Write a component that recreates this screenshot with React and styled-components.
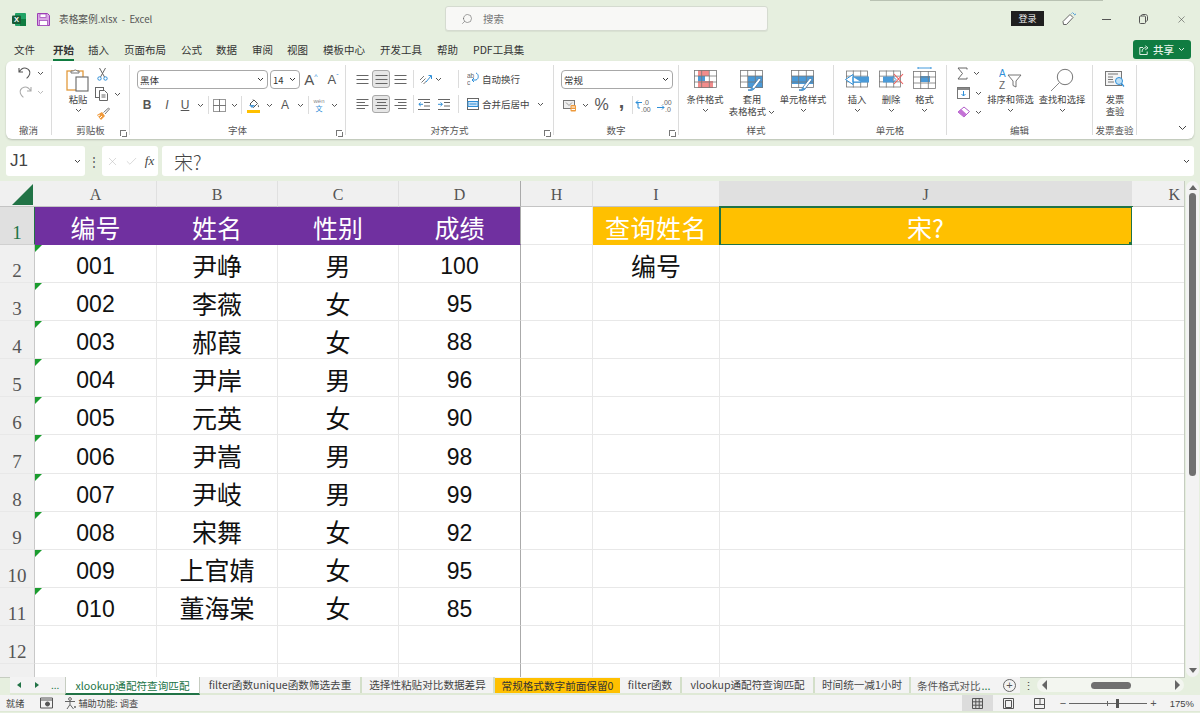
import React from 'react';
import styled, { createGlobalStyle } from 'styled-components';
import { Search, X, Check } from 'lucide-react';

const GlobalStyle = createGlobalStyle`
  html, body { margin: 0; padding: 0; background: #e6efdf; overflow: hidden; }
  body { font-family: "Noto Sans CJK SC", "Liberation Sans", sans-serif; color: #333; }
  * { box-sizing: border-box; }
`;

const colWidths = '35px 122px 121px 121px 122px 72px 127px 412px 53px';
const colNames = ['A', 'B', 'C', 'D', 'H', 'I', 'J', 'K'];
const menus = [
  ['文件', 18], ['开始', 14], ['插入', 15], ['页面布局', 15], ['公式', 14], ['数据', 15],
  ['审阅', 14], ['视图', 15], ['模板中心', 15], ['开发工具', 15], ['帮助', 15], ['PDF工具集', 0],
];
const students = [
  ['001', '尹峥', '男', '100'],
  ['002', '李薇', '女', '95'],
  ['003', '郝葭', '女', '88'],
  ['004', '尹岸', '男', '96'],
  ['005', '元英', '女', '90'],
  ['006', '尹嵩', '男', '98'],
  ['007', '尹岐', '男', '99'],
  ['008', '宋舞', '女', '92'],
  ['009', '上官婧', '女', '95'],
  ['010', '董海棠', '女', '85'],
];

const Chev = ({ c = '#555' }) => (
  <svg width="7" height="5" viewBox="0 0 7 5"><path d="M1 1l2.5 2.5L6 1" fill="none" stroke={c} strokeWidth="1" /></svg>
);

const Undo = ({ c = '#555' }) => (
  <svg width="14" height="14" viewBox="0 0 14 14" fill="none" stroke={c} strokeWidth="1.1">
    <path d="M1 2v4h4M1.2 6C3 3 5.5 1.5 8 2.2c3 .8 4.6 3.6 3.6 6.2-.6 1.6-1.6 2.9-3 4" />
  </svg>
);
const Redo = ({ c = '#aaa' }) => (
  <svg width="14" height="14" viewBox="0 0 14 14" fill="none" stroke={c} strokeWidth="1.1">
    <path d="M13 2v4H9M12.8 6C11 3 8.5 1.5 6 2.2 3 3 1.4 5.8 2.4 8.4c.6 1.6 1.6 2.9 3 4" />
  </svg>
);
const PasteIcon = () => (
  <svg width="24" height="24" viewBox="0 0 24 24" fill="none">
    <rect x="1" y="3" width="16" height="19" fill="#fff" stroke="#e29a3d" strokeWidth="1.3" />
    <path d="M5 5V3h2.5a2 2 0 0 1 3.5 0H13v2z" fill="#fff" stroke="#777" />
    <rect x="10" y="9" width="12" height="14" fill="#fff" stroke="#666" strokeWidth="1.1" />
  </svg>
);
const Scissors = () => (
  <svg width="11" height="14" viewBox="0 0 11 14" fill="none">
    <path d="M2.5 1l5 9M8.5 1l-5 9" stroke="#666" />
    <circle cx="2.5" cy="11.5" r="1.7" stroke="#2f8fd8" />
    <circle cx="8.5" cy="11.5" r="1.7" stroke="#2f8fd8" />
  </svg>
);
const CopyIcon = () => (
  <svg width="14" height="14" viewBox="0 0 14 14" fill="none" stroke="#666">
    <rect x=".5" y=".5" width="8" height="10" fill="#fff" />
    <path d="M4.5 3.5h5l3 3v7h-8z" fill="#fff" />
    <path d="M6.5 8h4M6.5 10h4" />
  </svg>
);
const Brush = () => (
  <svg width="14" height="14" viewBox="0 0 14 14" fill="none">
    <path d="M1 8l5-3 3 4-4 4z" fill="#ef9a3c" />
    <path d="M2 9l2-1M4 11l2-2" stroke="#fff" />
    <path d="M7.5 5.5L12.5 1l1 1-4.5 5" fill="#fff" stroke="#777" />
  </svg>
);
const BorderIcon = () => (
  <svg width="13" height="13" viewBox="0 0 13 13" fill="none">
    <rect x=".5" y=".5" width="12" height="12" stroke="#999" />
    <path d="M6.5 0v13M0 6.5h13" stroke="#777" />
  </svg>
);
const FillIcon = () => (
  <svg width="13" height="15" viewBox="0 0 13 15" fill="none">
    <path d="M3 6l4-4 3.5 3.5-4 4z" stroke="#555" />
    <path d="M6 1.5l1 1" stroke="#555" />
    <path d="M11 6.5c1 1.5 1.3 2 .6 2.8-.6-.2-1-1-.6-2.8z" fill="#555" />
    <path d="M2 7h6l-3 3z" fill="#4a9ad8" />
    <rect y="12" width="13" height="3" fill="#ffc000" />
  </svg>
);

const Lines = ({ mode = 'center', n = 3 }) => {
  const rows = n === 3 ? [2.5, 6.5, 10.5] : [1.5, 4.5, 7.5, 10.5];
  return (
    <svg width="13" height="13" viewBox="0 0 13 13" fill="none" stroke="#666">
      {rows.map((y, i) => {
        const short = i % 2 === 1;
        const x1 = short && mode === 'right' ? 4 : short && mode === 'center' ? 2 : 0.5;
        const x2 = short && mode === 'left' ? 9 : short && mode === 'center' ? 11 : 12.5;
        return <path key={y} d={`M${x1} ${y}H${x2}`} />;
      })}
    </svg>
  );
};
const Orient = () => (
  <svg width="13" height="13" viewBox="0 0 13 13" fill="none">
    <path d="M1 7l4-4M2.5 9.5l4-4M4.5 11l3-3" stroke="#777" />
    <path d="M7 9l5-6M9.5 2.5H12.5V6" stroke="#2f8fd8" />
  </svg>
);
const Indent = ({ right }) => (
  <svg width="12" height="11" viewBox="0 0 12 11" fill="none">
    <path d="M0 .5h12M6 3.5h6M6 7h6M0 10.5h12" stroke="#666" />
    {right ? <path d="M0 5.3h4M2.5 3.5l2 1.8-2 1.8" stroke="#2f8fd8" /> : <path d="M5 5.3H1M2.8 3.5l-2 1.8 2 1.8" stroke="#2f8fd8" />}
  </svg>
);
const WrapIcon = () => (
  <svg width="13" height="14" viewBox="0 0 13 14" fill="none">
    <text x="0" y="6" fontSize="6.5" fill="#666" fontFamily="Liberation Sans">ab</text>
    <text x="0" y="13" fontSize="6.5" fill="#666" fontFamily="Liberation Sans">c</text>
    <path d="M9 1c3 1 3 6 0 7H5.5M7 6l-2 2 2 2" stroke="#2f8fd8" />
  </svg>
);
const MergeIcon = () => (
  <svg width="12" height="12" viewBox="0 0 12 12" fill="none">
    <rect x=".5" y=".5" width="11" height="11" stroke="#666" />
    <rect x="1" y="3.5" width="10" height="5" fill="#cfe4f6" stroke="#2f8fd8" />
    <path d="M2.5 6h7" stroke="#2f8fd8" />
  </svg>
);
const Currency = () => (
  <svg width="14" height="13" viewBox="0 0 14 13" fill="none">
    <rect x=".5" y="1.5" width="11" height="8" stroke="#777" fill="#eee" />
    <path d="M3 3.5l3 3M9 3.5l-3 3" stroke="#999" />
    <rect x="7.5" y="6" width="5.5" height="6.5" rx="1" fill="#ee9a3c" />
    <path d="M8.5 8h3.5M8.5 10.5h3.5" stroke="#fff" />
  </svg>
);
const DecInc = () => (
  <svg width="18" height="15" viewBox="0 0 18 15" fill="none">
    <text x="8" y="6.5" fontSize="7" fill="#666" fontFamily="Liberation Sans">.0</text>
    <text x="6" y="14" fontSize="7" fill="#666" fontFamily="Liberation Sans">.00</text>
    <path d="M7 4.5H1M3 2.5l-2 2 2 2M3 5v5h2" stroke="#2f8fd8" />
  </svg>
);
const DecDec = () => (
  <svg width="18" height="15" viewBox="0 0 18 15" fill="none">
    <text x="6" y="6.5" fontSize="7" fill="#666" fontFamily="Liberation Sans">.00</text>
    <text x="9" y="14" fontSize="7" fill="#666" fontFamily="Liberation Sans">.0</text>
    <path d="M1 9.5h7M6 7.5l2 2-2 2" stroke="#2f8fd8" />
  </svg>
);

const TableLines = ({ w = 23, h = 18, y = 0 }) => (
  <g stroke="#777" fill="none" strokeWidth=".8">
    <rect x=".5" y={y + 0.5} width={w - 1} height={h - 1} />
    <path d={`M${w / 3} ${y}v${h}M${(2 * w) / 3} ${y}v${h}M0 ${y + h / 3}h${w}M0 ${y + (2 * h) / 3}h${w}`} />
  </g>
);
const CondIcon = () => (
  <svg width="23" height="18" viewBox="0 0 23 18">
    <rect x="4" y="0" width="11" height="6" fill="#f28c8c" />
    <rect x="4" y="6" width="7" height="5" fill="#4a9ad8" />
    <rect x="4" y="11" width="15" height="7" fill="#f28c8c" />
    <TableLines />
  </svg>
);
const BrushTip = ({ x = 9, y = 12 }) => (
  <g transform={`translate(${x} ${y})`}>
    <path d="M1 9c2 0 3.5-1 4-3L12-3l2 1.5L7 8c-1.5 1.5-4 2-6 1z" fill="#fff" stroke="#4a7fae" strokeWidth=".9" />
    <path d="M1 9c2 0 3.5-1 4-3l2.500 2c-1.500 1.500-4 2-6.500 1z" fill="#4a9ad8" />
  </g>
);
const TableStyleIcon = () => (
  <svg width="25" height="22" viewBox="0 0 25 22">
    <rect x="8" y="6" width="15" height="12" fill="#4a9ad8" />
    <TableLines h="18" />
    <BrushTip x={7} y={11} />
  </svg>
);
const CellStyleIcon = () => (
  <svg width="25" height="22" viewBox="0 0 25 22">
    <rect x="1" y="6" width="22" height="8" fill="#4a9ad8" />
    <TableLines h="18" />
    <BrushTip x={7} y={11} />
  </svg>
);
const InsertIcon = () => (
  <svg width="26" height="19" viewBox="0 0 26 19">
    <g transform="translate(2 .5)"><TableLines w={22} h={17} /></g>
    <rect x="9" y="6.5" width="16" height="6" fill="#4a9ad8" />
    <path d="M9 4.5L1.5 9.5 9 14.5zM9 7v5h8" fill="#fff" stroke="#2f8fd8" strokeWidth="1" />
  </svg>
);
const DeleteIcon = () => (
  <svg width="25" height="19" viewBox="0 0 25 19">
    <g transform="translate(0 .5)"><TableLines w={22} h={17} /></g>
    <rect x="4" y="6.5" width="10" height="6" fill="#4a9ad8" />
    <path d="M14 6.5l3 3-3 3" fill="none" stroke="#2f8fd8" />
    <path d="M15 4l9 10M24 4l-9 10" stroke="#ef5b5b" strokeWidth="1.1" />
  </svg>
);
const FormatIcon = () => (
  <svg width="23" height="22" viewBox="0 0 23 22">
    <path d="M5 1h13M5 0v2M18 0v2" stroke="#2f8fd8" strokeWidth=".9" />
    <rect x="7" y="9" width="10" height="6" fill="#4a9ad8" />
    <TableLines h="18" y={4} />
  </svg>
);
const AutoSum = () => (
  <svg width="11" height="13" viewBox="0 0 11 13"><path d="M10 2.5V1H1l4.500 5.500L1 12h9v-1.500" fill="none" stroke="#666" strokeWidth="1" /></svg>
);
const FillDown = () => (
  <svg width="13" height="12" viewBox="0 0 13 12" fill="none">
    <rect x=".5" y=".5" width="12" height="11" stroke="#777" />
    <rect x="1" y="1" width="11" height="2" fill="#888" />
    <path d="M6.5 4v5M4.5 7l2 2 2-2" stroke="#2f8fd8" />
  </svg>
);
const Eraser = () => (
  <svg width="13" height="12" viewBox="0 0 13 12" fill="none">
    <path d="M7 1l5.500 4.500L7 11 1 6z" fill="#fff" stroke="#b05cc8" />
    <path d="M1 6l3-3 5.500 5L7 11z" fill="#c472d6" />
  </svg>
);
const SortIcon = () => (
  <svg width="23" height="22" viewBox="0 0 23 22" fill="none">
    <text x="0" y="9" fontSize="10" fill="#2f8fd8" fontFamily="Liberation Sans">A</text>
    <text x="0" y="21" fontSize="10" fill="#666" fontFamily="Liberation Sans">Z</text>
    <path d="M9 7h13l-5 6v6l-3-1.500V13z" stroke="#666" strokeWidth=".9" fill="#fff" />
  </svg>
);
const FindIcon = () => (
  <svg width="24" height="24" viewBox="0 0 24 24" fill="none">
    <circle cx="15" cy="9" r="7.700" stroke="#666" strokeWidth=".9" />
    <path d="M9.500 14.500L1 23" stroke="#888" strokeWidth="1" />
  </svg>
);
const InvoiceIcon = () => (
  <svg width="20" height="17" viewBox="0 0 20 17" fill="none">
    <rect x=".5" y=".5" width="16" height="14" fill="#f4f4f4" stroke="#777" />
    <path d="M3 3h10M3 6h5M3 8.500h5M3 11h6" stroke="#777" />
    <circle cx="14" cy="10" r="3.500" fill="#bfe0f5" stroke="#2f8fd8" />
    <path d="M16.500 12.500L19 15.500" stroke="#2f8fd8" strokeWidth="1.200" />
  </svg>
);

const ExcelLogo = () => (
  <svg width="14" height="13" viewBox="0 0 14 13">
    <rect x="3" y="0" width="11" height="13" rx="1" fill="#21a366" />
    <rect x="8" y="6" width="6" height="7" fill="#107c41" />
    <rect x="0" y="2.500" width="9" height="8.500" rx="1" fill="#185c37" />
    <text x="2" y="9.300" fontSize="7.500" fontWeight="700" fill="#fff" fontFamily="Liberation Sans">X</text>
  </svg>
);
const SaveIcon = () => (
  <svg width="13" height="13" viewBox="0 0 13 13" fill="none">
    <path d="M.5.500h10l2 2v10H.5z" fill="#d9a6e4" stroke="#9c3fb5" />
    <rect x="3" y="1" width="6" height="3.500" fill="#fff" stroke="#9c3fb5" strokeWidth=".7" />
    <rect x="2.500" y="7.500" width="8" height="5" fill="#fff" stroke="#9c3fb5" strokeWidth=".7" />
  </svg>
);
const PenIcon = () => (
  <svg width="15" height="14" viewBox="0 0 15 14" fill="none">
    <path d="M1 9.500L8 2.500l3 3-6.500 7H1.500z" stroke="#666" fill="#fff" />
    <path d="M9.500 1.500l1-1M12 3l2-1M11 1l1 1" stroke="#4a9ad8" />
  </svg>
);
const RestoreIcon = () => (
  <svg width="9" height="10" viewBox="0 0 9 10" fill="none" stroke="#555">
    <rect x=".5" y="2" width="6" height="7.500" rx="1" />
    <path d="M2.500 2V1.300C2.500.800 3 .5 3.500.5h3c1 0 2 1 2 2V6c0 .8-.8 1.300-1.800 1.300" />
  </svg>
);
const ShareIcon = () => (
  <svg width="10" height="10" viewBox="0 0 10 10" fill="none" stroke="#dff0e3">
    <path d="M4 2.500H.8v7h7.400V6.500" />
    <path d="M3 7c0-3 1.800-4.300 4-4.300M6.300 .8L9 2.800 6.300 4.800" />
  </svg>
);

const Corner = () => (
  <svg width="21" height="21" viewBox="0 0 21 21"><path d="M21 0v21H0z" fill="#217346" /></svg>
);

const Cam = () => (
  <svg width="13" height="12" viewBox="0 0 13 12" fill="none" stroke="#555">
    <path d="M.5 1h12v10H.5z" />
    <path d="M.5 3h12" />
    <circle cx="7.500" cy="7" r="2" fill="#555" />
  </svg>
);
const Access = () => (
  <svg width="13" height="13" viewBox="0 0 13 13" fill="none" stroke="#666">
    <circle cx="6" cy="2" r="1.400" />
    <path d="M1 4.500h10M6 4.500v3L3 12M6 7.500l3.500 4.500" />
    <path d="M10 9l2 2M12 9l-2 2" stroke="#888" />
  </svg>
);
const ViewNormal = () => (
  <svg width="11" height="11" viewBox="0 0 11 11" fill="none" stroke="#555">
    <path d="M.5.500h10v10H.5zM3.800 0v11M7.200 0v11M0 3.800h11M0 7.200h11" />
  </svg>
);
const ViewPage = () => (
  <svg width="11" height="11" viewBox="0 0 11 11" fill="none" stroke="#555">
    <path d="M.5.500h10v10H.5z" />
    <path d="M2.500 2.500h6v7h-6z" />
  </svg>
);
const ViewBreak = () => (
  <svg width="11" height="11" viewBox="0 0 11 11" fill="none" stroke="#555">
    <path d="M.5.500h10v10H.5zM0 6.500h11M6 0v6.500" />
  </svg>
);

const App = () => {
  return (
    <Page>
      <GlobalStyle />
      <TopShadow />
      <TitleBar>
        <TitleLeft>
          <ExcelLogo />
          <SaveIcon />
          <DocName>表格案例.xlsx&nbsp; -&nbsp; Excel</DocName>
        </TitleLeft>
        <SearchBox>
          <Search size={12} color="#666" strokeWidth={1.2} style={{ transform: 'scaleX(-1)' }} />
          <span>搜索</span>
        </SearchBox>
        <TitleRight>
          <Login>登录</Login>
          <WinBtn $w={50}><PenIcon /></WinBtn>
          <WinBtn $w={24}><svg width="9" height="1"><path d="M0 .5h9" stroke="#555" /></svg></WinBtn>
          <WinBtn $w={50}><RestoreIcon /></WinBtn>
          <WinBtn $w={26}><X size={11} color="#444" strokeWidth={1.2} /></WinBtn>
        </TitleRight>
      </TitleBar>

      <MenuRow>
        {menus.map(([m, gap]) => (
          <MenuItem key={m} $active={m === '开始'} $gap={gap}>{m}</MenuItem>
        ))}
        <ShareBtn><ShareIcon /><b>共享</b><Chev c="#dff0e3" /></ShareBtn>
      </MenuRow>

      <Ribbon>
        <Group $w={46} label="撤消">
          <Col $gap={5} $pt={1} $pl={12}>
            <Row $gap={5}><Undo /><Chev /></Row>
            <Row $gap={5}><Redo /><Chev c="#bbb" /></Row>
          </Col>
        </Group>

        <Group $w={78} label="剪贴板" launcher>
          <Row $align="flex-start" $pt={2} $pl={14}>
            <BigBtn $w={24}>
              <IconSlot $top={1}><PasteIcon /></IconSlot>
              <BigLabel>粘贴</BigLabel>
              <Chev />
            </BigBtn>
            <Col $gap={6} $pl={5}>
              <Row $pl={2}><Scissors /></Row>
              <Row $gap={5}><CopyIcon /><Chev /></Row>
              <Row $pl={1}><Brush /></Row>
            </Col>
          </Row>
        </Group>

        <Group $w={216} label="字体" launcher>
          <Col $gap={7} $pt={5} $pl={7}>
            <Row $gap={2}>
              <Select $w={131}><span>黑体</span><Chev c="#333" /></Select>
              <Select $w={30}><span>14</span><Chev c="#333" /></Select>
              <GrowA>A<sup>^</sup></GrowA>
              <GrowA $small>A<sup>ˇ</sup></GrowA>
            </Row>
            <Row>
              <FontBtn $w={20}><b>B</b></FontBtn>
              <FontBtn $w={20}><i>I</i></FontBtn>
              <FontBtn $w={16}><u>U</u></FontBtn>
              <ChevBox $w={14}><Chev /></ChevBox>
              <VSep />
              <FontBtn $w={18}><BorderIcon /></FontBtn>
              <ChevBox $w={12}><Chev /></ChevBox>
              <VSep />
              <FontBtn $w={21}><FillIcon /></FontBtn>
              <ChevBox $w={11}><Chev /></ChevBox>
              <FontBtn $w={20}>A</FontBtn>
              <ChevBox $w={10}><Chev /></ChevBox>
              <VSep $m={3} />
              <FontBtn $w={14}><Wen>wén<em>文</em></Wen></FontBtn>
              <ChevBox $w={16}><Chev /></ChevBox>
            </Row>
          </Col>
        </Group>

        <Group $w={208} label="对齐方式" launcher>
          <Col $gap={7} $pt={5} $pl={7}>
            <Row>
              <AlignBtn><Lines mode="full" /></AlignBtn>
              <AlignBtn $active><Lines mode="full" /></AlignBtn>
              <AlignBtn><Lines mode="full" /></AlignBtn>
              <VSep $m={3} />
              <AlignBtn $w={16}><Orient /></AlignBtn>
              <ChevBox $w={11}><Chev /></ChevBox>
              <Spacer $w={13} />
              <VSep />
              <Spacer $w={5} />
              <AlignBtn $w={16}><WrapIcon /></AlignBtn>
              <SmallText>自动换行</SmallText>
            </Row>
            <Row>
              <AlignBtn><Lines mode="left" n={4} /></AlignBtn>
              <AlignBtn $active><Lines mode="center" n={4} /></AlignBtn>
              <AlignBtn><Lines mode="right" n={4} /></AlignBtn>
              <VSep $m={3} />
              <AlignBtn $w={14}><Indent /></AlignBtn>
              <AlignBtn $w={26}><Indent right /></AlignBtn>
              <VSep />
              <Spacer $w={5} />
              <AlignBtn $w={16}><MergeIcon /></AlignBtn>
              <SmallText>合并后居中</SmallText>
              <ChevBox $w={22}><Chev /></ChevBox>
            </Row>
          </Col>
        </Group>

        <Group $w={125} label="数字" launcher>
          <Col $gap={7} $pt={5} $pl={7}>
            <Select $w={112}><span>常规</span><Chev c="#333" /></Select>
            <Row>
              <FontBtn $w={18}><Currency /></FontBtn>
              <ChevBox $w={12}><Chev /></ChevBox>
              <FontBtn $w={21}><Percent>%</Percent></FontBtn>
              <FontBtn $w={19}><Comma>,</Comma></FontBtn>
              <VSep />
              <FontBtn $w={20}><DecInc /></FontBtn>
              <FontBtn $w={22}><DecDec /></FontBtn>
            </Row>
          </Col>
        </Group>

        <Group $w={155} label="样式">
          <Row $align="flex-start" $pt={2} $pl={3}>
            <BigBtn $w={46}>
              <IconSlot $top={3}><CondIcon /></IconSlot>
              <BigLabel>条件格式</BigLabel>
              <Chev />
            </BigBtn>
            <BigBtn $w={48}>
              <IconSlot $top={3}><TableStyleIcon /></IconSlot>
              <BigLabel>套用</BigLabel>
              <BigLabel>表格格式 <Chev /></BigLabel>
            </BigBtn>
            <BigBtn $w={54}>
              <IconSlot $top={3}><CellStyleIcon /></IconSlot>
              <BigLabel>单元格样式</BigLabel>
              <Chev />
            </BigBtn>
          </Row>
        </Group>

        <Group $w={113} label="单元格">
          <Row $align="flex-start" $pt={2} $pl={6}>
            <BigBtn $w={34}><IconSlot $top={3}><InsertIcon /></IconSlot><BigLabel>插入</BigLabel><Chev /></BigBtn>
            <BigBtn $w={34}><IconSlot $top={3}><DeleteIcon /></IconSlot><BigLabel>删除</BigLabel><Chev /></BigBtn>
            <BigBtn $w={33}><IconSlot><FormatIcon /></IconSlot><BigLabel>格式</BigLabel><Chev /></BigBtn>
          </Row>
        </Group>

        <Group $w={146} label="编辑">
          <Row $align="flex-start" $pt={2} $pl={10}>
            <Col $gap={7}>
              <Row $gap={5}><AutoSum /><Chev /></Row>
              <Row $gap={5}><FillDown /><Chev /></Row>
              <Row $gap={5}><Eraser /><Chev /></Row>
            </Col>
            <BigBtn $w={53} $ml={2}><IconSlot $top={1}><SortIcon /></IconSlot><BigLabel>排序和筛选</BigLabel><Chev /></BigBtn>
            <BigBtn $w={50}><IconSlot $top={1}><FindIcon /></IconSlot><BigLabel>查找和选择</BigLabel><Chev /></BigBtn>
          </Row>
        </Group>

        <Group $w={44} label="发票查验">
          <Row $align="flex-start" $pt={2} $pl={12}>
            <BigBtn $w={20}>
              <IconSlot $top={4}><InvoiceIcon /></IconSlot>
              <BigLabel>发票</BigLabel>
              <BigLabel>查验</BigLabel>
            </BigBtn>
          </Row>
        </Group>

        <Collapse><svg width="9" height="6" viewBox="0 0 9 6"><path d="M1 1l3.500 3.500L8 1" fill="none" stroke="#444" /></svg></Collapse>
      </Ribbon>

      <FormulaBar>
        <NameBox><span>J1</span><Chev c="#444" /></NameBox>
        <Dots>⋮</Dots>
        <FxBox>
          <X size={13} color="#bbb" strokeWidth={1} />
          <Check size={13} color="#bbb" strokeWidth={1} />
          <Fx>fx</Fx>
        </FxBox>
        <FormulaInput><span>宋?</span><Chev c="#444" /></FormulaInput>
      </FormulaBar>

      <SheetWrap>
        <Sheet>
          <CornerCell><Corner /></CornerCell>
          {colNames.map((c, i) => (
            <ColHead key={c} $selected={c === 'J'} $freeze={i === 3} $edge={c === 'K'}>{c}</ColHead>
          ))}

          <RowHead $selected>1</RowHead>
          {['编号', '姓名', '性别', '成绩'].map((t, i) => (
            <Cell key={t} $bg="#7030a0" $color="#fff" $freeze={i === 3}>{t}</Cell>
          ))}
          <Cell />
          <Cell $bg="#ffc000" $color="#fff" $tight>查询姓名</Cell>
          <Cell $bg="#ffc000" $color="#fff" $active>宋?<Handle /></Cell>
          <Cell />

          {Array.from({ length: 11 }, (_, r) => {
            const row = students[r];
            return (
              <React.Fragment key={r}>
                <RowHead>{r + 2}</RowHead>
                <Cell $num $flag={!!row}>{row && row[0]}</Cell>
                <Cell>{row && row[1]}</Cell>
                <Cell>{row && row[2]}</Cell>
                <Cell $num $freeze>{row && row[3]}</Cell>
                <Cell />
                <Cell>{r === 0 ? '编号' : ''}</Cell>
                <Cell />
                <Cell />
              </React.Fragment>
            );
          })}

          <RowHead />
          {colNames.map((c, i) => <Cell key={c} $freeze={i === 3} />)}
        </Sheet>
        <VScroll>
          <ArrowUp />
          <VThumb />
          <ArrowDown />
        </VScroll>
      </SheetWrap>

      <TabBar>
        <TabStrip>
          <TabNav>
            <NavArrow $left />
            <NavArrow />
            <NavDots>...</NavDots>
          </TabNav>
          <ActiveTab>xlookup通配符查询匹配</ActiveTab>
          <SheetTab $w={162}>filter函数unique函数筛选去重</SheetTab>
          <SheetTab $w={133}>选择性粘贴对比数据差异</SheetTab>
          <YellowTab>常规格式数字前面保留0</YellowTab>
          <SheetTab $w={62}>filter函数</SheetTab>
          <SheetTab $w={133}>vlookup通配符查询匹配</SheetTab>
          <SheetTab $w={96}>时间统一减1小时</SheetTab>
          <LastTab>条件格式对比 <em>...</em></LastTab>
          <AddTab>+</AddTab>
        </TabStrip>
        <SplitDots>⋮</SplitDots>
        <HScroll>
          <NavArrow $left $big />
          <HThumb />
          <NavArrow $big />
        </HScroll>
      </TabBar>

      <StatusBar>
        <StatusText>就绪</StatusText>
        <StatusIcon $w={15} $ml={16}><Cam /></StatusIcon>
        <StatusIcon $w={14} $ml={9}><Access /></StatusIcon>
        <StatusText>辅助功能: 调查</StatusText>
        <StatusRight>
          <ViewBtn $active><ViewNormal /></ViewBtn>
          <ViewBtn><ViewPage /></ViewBtn>
          <ViewBtn><ViewBreak /></ViewBtn>
          <Zoom>
            <b>−</b>
            <Slider><SliderTick /><SliderThumb /></Slider>
            <b>+</b>
          </Zoom>
          <ZoomPct>175%</ZoomPct>
        </StatusRight>
      </StatusBar>
    </Page>
  );
};

const Group = ({ $w, label, launcher, children }) => (
  <GroupBox $w={$w}>
    <GroupBody>{children}</GroupBody>
    <GroupLabel>{label}</GroupLabel>
    {launcher && <Launcher />}
  </GroupBox>
);

export default App;

const Page = styled.div`
  position: relative;
  width: 1200px;
  height: 713px;
  background: #e6efdf;
  overflow: hidden;
  display: flex;
  flex-direction: column;
`;

const TopShadow = styled.div`
  position: absolute;
  left: 870px;
  top: 0;
  width: 233px;
  height: 1px;
  background: #b9c2b3;
`;

const TitleBar = styled.div`
  height: 38px;
  display: flex;
  align-items: center;
`;

const TitleLeft = styled.div`
  width: 445px;
  padding-left: 12px;
  display: flex;
  align-items: center;
  gap: 11px;
`;

const DocName = styled.span`
  font-size: 9.7px;
  color: #555;
  margin-left: -2px;
`;

const SearchBox = styled.div`
  width: 323px;
  height: 25px;
  margin-top: -1px;
  background: #f8f8f6;
  border: 1px solid #d5dbd0;
  border-radius: 3px;
  box-shadow: 0 1px 1px rgba(0, 0, 0, 0.06);
  display: flex;
  align-items: center;
  padding-left: 15px;
  gap: 10px;
  font-size: 10.5px;
  color: #777;
`;

const TitleRight = styled.div`
  flex: 1;
  display: flex;
  align-items: center;
  justify-content: flex-end;
  padding-right: 6px;
`;

const Login = styled.div`
  width: 33px;
  height: 15px;
  margin-top: -1px;
  background: #1f1f1f;
  color: #eee;
  font-size: 9px;
  line-height: 15px;
  text-align: center;
`;

const WinBtn = styled.div`
  width: ${({ $w }) => $w}px;
  display: flex;
  justify-content: center;
`;

const MenuRow = styled.div`
  height: 23px;
  display: flex;
  align-items: center;
  padding-left: 14px;
  position: relative;
`;

const MenuItem = styled.div`
  font-size: 10.5px;
  color: #333;
  font-weight: ${({ $active }) => ($active ? 700 : 400)};
  margin-right: ${({ $gap }) => $gap}px;
  position: relative;
  line-height: 20px;
  &::after {
    content: '';
    display: ${({ $active }) => ($active ? 'block' : 'none')};
    position: absolute;
    left: 0;
    right: 0;
    bottom: -1px;
    height: 2px;
    background: #107c41;
  }
`;

const ShareBtn = styled.div`
  margin-left: auto;
  margin-right: 9px;
  width: 58px;
  height: 19px;
  background: #107c41;
  color: #eaf5ec;
  border-radius: 3px;
  display: flex;
  align-items: center;
  justify-content: center;
  gap: 4px;
  font-size: 10.5px;
  b { font-weight: 500; }
`;

const Ribbon = styled.div`
  margin: 0 6px;
  height: 78px;
  flex-shrink: 0;
  background: #fff;
  border-radius: 6px;
  box-shadow: 0 1px 2px rgba(0, 0, 0, 0.2);
  display: flex;
  position: relative;
`;

const GroupBox = styled.div`
  width: ${({ $w }) => $w}px;
  flex-shrink: 0;
  position: relative;
  display: flex;
  flex-direction: column;
  margin: 4px 0;
  border-right: 1px solid #dcdcdc;
`;

const GroupBody = styled.div`
  flex: 1;
  min-height: 0;
`;

const GroupLabel = styled.div`
  height: 13px;
  line-height: 13px;
  margin-bottom: -2px;
  text-align: center;
  font-size: 9.5px;
  color: #555;
  white-space: nowrap;
`;

const Launcher = styled.div`
  position: absolute;
  right: 3px;
  bottom: -1px;
  width: 6px;
  height: 6px;
  border-left: 1px solid #777;
  border-top: 1px solid #777;
  &::after {
    content: '';
    position: absolute;
    left: 1px;
    top: 1px;
    width: 4px;
    height: 4px;
    border-right: 1px solid #777;
    border-bottom: 1px solid #777;
  }
`;

const Row = styled.div`
  display: flex;
  align-items: ${({ $align }) => $align || 'center'};
  gap: ${({ $gap }) => $gap || 0}px;
  padding-top: ${({ $pt }) => $pt || 0}px;
  padding-left: ${({ $pl }) => $pl || 0}px;
`;

const Col = styled.div`
  display: flex;
  flex-direction: column;
  gap: ${({ $gap }) => $gap || 0}px;
  padding-top: ${({ $pt }) => $pt || 0}px;
  padding-left: ${({ $pl }) => $pl || 0}px;
`;

const BigBtn = styled.div`
  width: ${({ $w }) => $w}px;
  margin-left: ${({ $ml }) => $ml || 0}px;
  display: flex;
  flex-direction: column;
  align-items: center;
  flex-shrink: 0;
`;

const IconSlot = styled.div`
  height: 26px;
  padding-top: ${({ $top }) => $top || 0}px;
  display: flex;
  align-items: flex-start;
  justify-content: center;
`;

const BigLabel = styled.div`
  font-size: 9.3px;
  line-height: 12px;
  color: #444;
  white-space: nowrap;
  & + svg { margin-top: 3px; }
`;

const Select = styled.div`
  width: ${({ $w }) => $w}px;
  height: 19px;
  border: 1px solid #a8a8a8;
  border-radius: 4px;
  display: flex;
  align-items: center;
  justify-content: space-between;
  padding: 0 3px 0 2px;
  font-size: 9.5px;
  color: #333;
  flex-shrink: 0;
  background: #fff;
`;

const GrowA = styled.div`
  width: 20px;
  text-align: center;
  font-family: "Liberation Sans", sans-serif;
  font-size: ${({ $small }) => ($small ? 13 : 15)}px;
  color: #555;
  margin-left: ${({ $small }) => ($small ? 0 : -1)}px;
  white-space: nowrap;
  sup { font-size: 7px; color: #2f8fd8; line-height: 0; }
`;

const FontBtn = styled.div`
  width: ${({ $w }) => $w}px;
  height: 18px;
  display: flex;
  align-items: center;
  justify-content: center;
  font-family: "Liberation Sans", sans-serif;
  font-size: 12px;
  color: #555;
  flex-shrink: 0;
`;

const ChevBox = styled.div`
  width: ${({ $w }) => $w}px;
  display: flex;
  justify-content: center;
  flex-shrink: 0;
`;

const VSep = styled.div`
  width: 1px;
  height: 18px;
  background: #dcdcdc;
  margin: 0 ${({ $m }) => $m ?? 1}px;
  flex-shrink: 0;
`;

const Spacer = styled.div`
  width: ${({ $w }) => $w}px;
  flex-shrink: 0;
`;

const Wen = styled.div`
  font-size: 6px;
  line-height: 7px;
  text-align: center;
  color: #888;
  display: flex;
  flex-direction: column;
  em { font-style: normal; color: #2f8fd8; font-size: 7px; font-family: "Noto Sans CJK SC", sans-serif; }
`;

const AlignBtn = styled.div`
  width: ${({ $w }) => $w || 18}px;
  height: 18px;
  margin-right: ${({ $w }) => ($w ? 0 : 1)}px;
  display: flex;
  align-items: center;
  justify-content: center;
  flex-shrink: 0;
  border-radius: 3px;
  background: ${({ $active }) => ($active ? '#e6e6e6' : 'transparent')};
  border: 1px solid ${({ $active }) => ($active ? '#a8a8a8' : 'transparent')};
`;

const SmallText = styled.span`
  font-size: 9.5px;
  color: #444;
  margin-left: 1px;
  white-space: nowrap;
`;

const Percent = styled.span`
  font-size: 16px;
`;

const Comma = styled.span`
  font-size: 20px;
  font-weight: 700;
  line-height: 10px;
  margin-top: -8px;
`;

const Collapse = styled.div`
  position: absolute;
  right: 7px;
  bottom: 8px;
  line-height: 0;
`;

const FormulaBar = styled.div`
  height: 30px;
  margin: 7px 6px 0;
  flex-shrink: 0;
  display: flex;
  align-items: stretch;
`;

const NameBox = styled.div`
  width: 79px;
  background: #fff;
  border-radius: 3px;
  display: flex;
  align-items: center;
  justify-content: space-between;
  padding: 0 4px 0 4px;
  font-family: "Liberation Sans", sans-serif;
  font-size: 17px;
  color: #444;
`;

const Dots = styled.div`
  width: 17px;
  text-align: center;
  line-height: 30px;
  font-size: 12px;
  color: #555;
`;

const FxBox = styled.div`
  width: 56px;
  background: #fff;
  border-radius: 3px;
  display: flex;
  align-items: center;
  justify-content: center;
  gap: 6px;
`;

const Fx = styled.i`
  font-family: "Liberation Serif", serif;
  font-size: 13px;
  color: #444;
  margin-left: 1px;
`;

const FormulaInput = styled.div`
  flex: 1;
  margin-left: 4px;
  background: #fff;
  border-radius: 3px;
  display: flex;
  align-items: center;
  justify-content: space-between;
  padding: 0 4px 0 12px;
  font-size: 19px;
  color: #444;
  font-weight: 300;
`;

const SheetWrap = styled.div`
  height: 496px;
  margin-top: 5px;
  flex-shrink: 0;
  display: flex;
`;

const Sheet = styled.div`
  width: 1185px;
  height: 497px;
  display: grid;
  grid-template-columns: ${colWidths};
  grid-template-rows: 26px repeat(12, 38.08px) 14px;
  background: #fff;
  overflow: hidden;
  border-bottom: 1px solid #c6cdc1;
  border-right: 1px solid #c6cdc1;
`;

const CornerCell = styled.div`
  background: #f0f0f0;
  border-bottom: 1px solid #c4c4c4;
  padding: 3px 0 0 12px;
  line-height: 0;
`;

const ColHead = styled.div`
  background: ${({ $selected }) => ($selected ? '#e0e0e0' : '#f0f0f0')};
  color: #555;
  font-family: "Liberation Serif", serif;
  font-size: 16px;
  display: flex;
  align-items: center;
  justify-content: ${({ $edge }) => ($edge ? 'flex-end' : 'center')};
  padding-right: ${({ $edge }) => ($edge ? 4 : 0)}px;
  padding-top: 3px;
  border-bottom: 1px solid #c4c4c4;
  border-right: ${({ $freeze }) => ($freeze ? '1px solid #aaa' : '1px solid #e0e0e0')};
`;

const RowHead = styled.div`
  background: ${({ $selected }) => ($selected ? '#e0e0e0' : '#f0f0f0')};
  color: ${({ $selected }) => ($selected ? '#217346' : '#555')};
  font-family: "Liberation Serif", serif;
  font-size: 19px;
  display: flex;
  align-items: flex-end;
  justify-content: center;
  border-bottom: 1px solid ${({ $selected }) => ($selected ? '#d0d0d0' : '#e8e8e8')};
  border-right: 1px solid ${({ $selected }) => ($selected ? '#217346' : '#c8c8c8')};
`;

const Cell = styled.div`
  position: relative;
  background: ${({ $bg }) => $bg || '#fff'};
  color: ${({ $color }) => $color || '#111'};
  font-family: ${({ $num }) => ($num ? '"Liberation Sans", "Noto Sans CJK SC"' : '"Noto Sans CJK SC", "Liberation Sans"')}, sans-serif;
  font-size: ${({ $num }) => ($num ? 23 : 25)}px;
  letter-spacing: ${({ $tight }) => ($tight ? 0.5 : 0)}px;
  line-height: 1;
  white-space: nowrap;
  display: flex;
  align-items: center;
  justify-content: center;
  padding-top: ${({ $num }) => ($num ? 6 : 3)}px;
  border-bottom: 1px solid #e8e8e8;
  border-right: ${({ $freeze }) => ($freeze ? '1px solid #aaa' : '1px solid #e8e8e8')};
  ${({ $bg }) => $bg && 'border-bottom-color: transparent; border-right-color: transparent;'}
  ${({ $bg, $freeze }) => $bg && $freeze && 'border-right: 1px solid #aaa;'}
  ${({ $active }) => $active && 'outline: 2px solid #217346; outline-offset: -1px;'}
  ${({ $flag }) => $flag && `
    &::before {
      content: '';
      position: absolute;
      left: 0;
      top: 0;
      border-top: 7px solid #1a9c2e;
      border-right: 7px solid transparent;
    }
  `}
`;

const Handle = styled.span`
  position: absolute;
  right: -3px;
  bottom: -3px;
  width: 5px;
  height: 5px;
  background: #217346;
`;

const VScroll = styled.div`
  width: 13px;
  margin-left: 1px;
  background: #f3f3f3;
  border-radius: 7px;
  display: flex;
  flex-direction: column;
  align-items: center;
  padding: 4px 0;
`;

const ArrowUp = styled.div`
  width: 0;
  height: 0;
  border-left: 4px solid transparent;
  border-right: 4px solid transparent;
  border-bottom: 5px solid #666;
`;

const ArrowDown = styled.div`
  width: 0;
  height: 0;
  margin-top: auto;
  border-left: 4px solid transparent;
  border-right: 4px solid transparent;
  border-top: 5px solid #666;
`;

const VThumb = styled.div`
  width: 7px;
  height: 283px;
  margin-top: 3px;
  background: #707070;
  border-radius: 4px;
`;

const TabBar = styled.div`
  height: 18px;
  flex-shrink: 0;
  display: flex;
  align-items: stretch;
  padding-left: 10px;
`;

const TabStrip = styled.div`
  width: 1010px;
  flex-shrink: 0;
  display: flex;
  background: #f3f3f3;
  border-bottom: 2px solid #dfe9d6;
`;

const TabNav = styled.div`
  width: 55px;
  flex-shrink: 0;
  display: flex;
  align-items: center;
  padding-left: 7px;
  gap: 14px;
`;

const NavArrow = styled.span`
  width: 0;
  height: 0;
  border-top: ${({ $big }) => ($big ? 5 : 3)}px solid transparent;
  border-bottom: ${({ $big }) => ($big ? 5 : 3)}px solid transparent;
  ${({ $left, $big }) => ($left ? 'border-right' : 'border-left')}: ${({ $big }) => ($big ? 5 : 4)}px solid ${({ $big }) => ($big ? '#666' : '#217346')};
`;

const NavDots = styled.span`
  font-size: 10px;
  color: #217346;
  line-height: 10px;
  margin-left: -2px;
`;

const tabText = `
  font-size: 10.6px;
  white-space: nowrap;
  flex-shrink: 0;
  display: flex;
  align-items: center;
  justify-content: center;
`;

const ActiveTab = styled.div`
  ${tabText}
  width: 135px;
  background: #fff;
  color: #217346;
  border-right: 1px solid #c6cdc1;
  border-left: 1px solid #c6cdc1;
  height: 18px;
  border-bottom: 2px solid #217346;
`;

const SheetTab = styled.div`
  ${tabText}
  width: ${({ $w }) => $w}px;
  color: #444;
  padding-bottom: 1px;
  border-right: 2px solid #d3dfc9;
`;

const YellowTab = styled.div`
  ${tabText}
  width: 125px;
  margin-top: 1px;
  background: #ffc000;
  color: #333;
`;

const LastTab = styled.div`
  ${tabText}
  width: 88px;
  color: #555;
  padding-left: 6px;
  justify-content: flex-start;
  overflow: hidden;
  em { font-style: normal; color: #217346; margin-left: 1px; }
`;

const AddTab = styled.div`
  width: 13px;
  height: 13px;
  margin: 2px 0 0 4px;
  border: 1px solid #666;
  border-radius: 50%;
  font-family: "Liberation Sans", sans-serif;
  font-size: 11px;
  line-height: 11px;
  text-align: center;
  color: #555;
  flex-shrink: 0;
`;

const SplitDots = styled.div`
  width: 17px;
  text-align: center;
  font-size: 11px;
  line-height: 16px;
  color: #444;
`;

const HScroll = styled.div`
  width: 147px;
  height: 14px;
  margin-top: 1px;
  background: #f3f6f0;
  border-radius: 7px;
  display: flex;
  align-items: center;
  padding: 0 4px 0 5px;
  justify-content: space-between;
`;

const HThumb = styled.div`
  width: 40px;
  height: 7px;
  border-radius: 4px;
  background: #707070;
`;

const StatusBar = styled.div`
  height: 17px;
  flex-shrink: 0;
  background: #f3f3f3;
  border-bottom: 1px solid #dfe9d6;
  display: flex;
  align-items: center;
  padding-left: 6px;
`;

const StatusText = styled.span`
  font-size: 9.2px;
  color: #444;
`;

const StatusIcon = styled.div`
  width: ${({ $w }) => $w}px;
  margin-left: ${({ $ml }) => $ml || 0}px;
  display: flex;
  align-items: center;
`;

const StatusRight = styled.div`
  margin-left: auto;
  display: flex;
  align-items: center;
  height: 100%;
  padding-right: 6px;
`;

const ViewBtn = styled.div`
  width: 31px;
  height: 100%;
  display: flex;
  align-items: center;
  justify-content: center;
  background: ${({ $active }) => ($active ? '#dcdcdc' : 'transparent')};
`;

const Zoom = styled.div`
  display: flex;
  align-items: center;
  margin-left: 5px;
  gap: 3px;
  b { font-weight: 400; font-size: 11px; color: #555; font-family: "Liberation Sans", sans-serif; }
`;

const Slider = styled.div`
  position: relative;
  width: 78px;
  height: 1px;
  background: #666;
`;

const SliderTick = styled.span`
  position: absolute;
  left: 38px;
  top: -2px;
  width: 1px;
  height: 5px;
  background: #666;
`;

const SliderThumb = styled.span`
  position: absolute;
  left: 47px;
  top: -4px;
  width: 3px;
  height: 9px;
  background: #555;
`;

const ZoomPct = styled.span`
  font-family: "Liberation Sans", sans-serif;
  font-size: 9.5px;
  color: #444;
  margin-left: 13px;
`;
